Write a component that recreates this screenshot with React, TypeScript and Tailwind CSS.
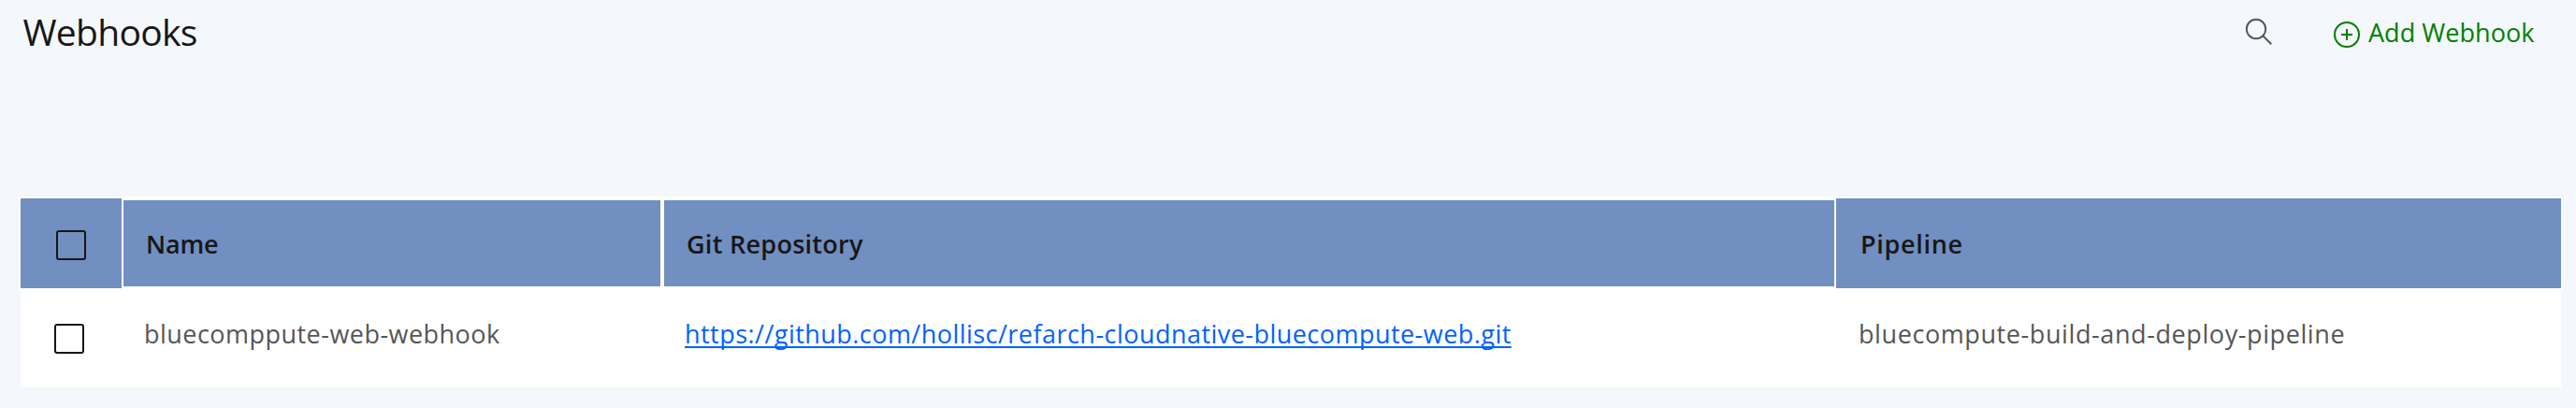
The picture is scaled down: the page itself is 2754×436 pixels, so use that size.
function Checkbox({ label }: { label: string }) {
  return (
    <span
      role="checkbox"
      aria-checked="false"
      aria-label={label}
      className="block size-8 rounded-[3px] border-2 border-[#161616]"
    />
  );
}

function SearchIcon() {
  return (
    <svg className="size-8" viewBox="0 0 32 32" fill="none" stroke="#565656" strokeWidth="1.9">
      <circle cx="14" cy="13" r="10.2" />
      <path d="M21.2 20.3 30.3 29.3" />
    </svg>
  );
}

function AddIcon() {
  return (
    <svg className="size-7" viewBox="0 0 28 28" fill="none" stroke="#008000" strokeWidth="2">
      <circle cx="14" cy="14" r="13" />
      <path d="M14 8v12M8 14h12" />
    </svg>
  );
}

export default function App() {
  return (
    <div className="h-[436px] w-[2754px] overflow-hidden bg-[#f4f7fc] font-['Open_Sans',sans-serif] text-[27px] leading-9">
      <header className="flex h-[210px] items-start pl-[24.5px] pr-[45px]">
        <h1 className="pt-[8px] text-[39px] leading-[52px] tracking-[-0.7px] text-[#171717]">Webhooks</h1>
        <div className="ml-auto flex items-start">
          <button aria-label="Search" className="mr-[65px] mt-[18px]">
            <SearchIcon />
          </button>
          <button className="flex w-[214px] items-start whitespace-nowrap text-[#008000]">
            <span className="mr-[9px] mt-[23px]">
              <AddIcon />
            </span>
            <span className="mt-[17px] tracking-[0.05px]">Add Webhook</span>
          </button>
        </div>
      </header>

      <div className="mx-[20px] w-[2720px]">
        <div className="flex h-[100px] border-2 border-white bg-white font-semibold text-[#171717]">
          <div className="flex w-[108px] items-center bg-[#718fc1] pl-[38px] pt-[4px]">
            <Checkbox label="Select all webhooks" />
          </div>
          <div className="my-[2px] ml-[2px] flex w-[574px] items-center bg-[#718fc1] pl-[24px] pt-[2px] tracking-[-0.2px]">
            Name
          </div>
          <div className="my-[2px] ml-[4px] flex w-[1251px] items-center bg-[#718fc1] pl-[24px] pt-[2px] tracking-[0.28px]">
            Git Repository
          </div>
          <div className="ml-[2px] flex flex-1 items-center bg-[#718fc1] pl-[26px] pt-[2px] tracking-[0.69px]">
            Pipeline
          </div>
        </div>
        <div className="mx-[2px] flex h-[104px] items-center bg-white text-[#565656]">
          <div className="w-[132px] pl-[36px]">
            <Checkbox label="Select bluecomppute-web-webhook" />
          </div>
          <div className="w-[578px] pb-[11px] tracking-[0.47px]">bluecomppute-web-webhook</div>
          <div className="w-[1255px] pb-[11px] tracking-[0.46px]">
            <a
              href="https://github.com/hollisc/refarch-cloudnative-bluecompute-web.git"
              className="text-[#0062ff] underline decoration-2 underline-offset-[3px] [text-decoration-skip-ink:none]"
            >
              https://github.com/hollisc/refarch-cloudnative-bluecompute-web.git
            </a>
          </div>
          <div className="pb-[11px] tracking-[0.59px]">bluecompute-build-and-deploy-pipeline</div>
        </div>
      </div>
    </div>
  );
}
